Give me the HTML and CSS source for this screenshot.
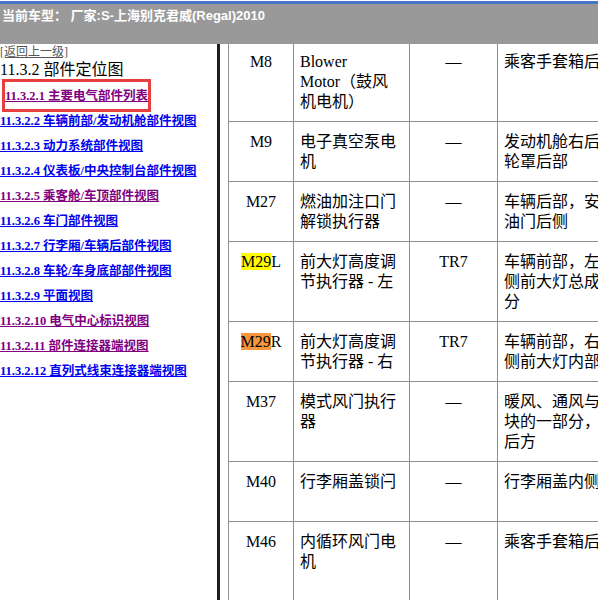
FILE: index.html
```html
<!DOCTYPE html>
<html lang="zh-CN">
<head>
    <meta charset="UTF-8">
    <meta name="viewport" content="width=device-width, initial-scale=1.0">
    <title>部件定位图</title>
    <link rel="stylesheet" href="styles.css">
</head>
<body>

    <div class="top-bar">当前车型： 厂家:S-上海别克君威(Regal)2010</div>

    <div class="frames">
        <div class="nav">
            <a href="#" class="back">[返回上一级]</a>
            <div class="nav-title">11.3.2 部件定位图</div>
            <ul class="nav-list">
                <li class="current"><a href="#" class="visited">11.3.2.1 主要电气部件列表</a></li>
                <li><a href="#">11.3.2.2 车辆前部/发动机舱部件视图</a></li>
                <li><a href="#">11.3.2.3 动力系统部件视图</a></li>
                <li><a href="#">11.3.2.4 仪表板/中央控制台部件视图</a></li>
                <li><a href="#" class="visited">11.3.2.5 乘客舱/车顶部件视图</a></li>
                <li><a href="#">11.3.2.6 车门部件视图</a></li>
                <li><a href="#">11.3.2.7 行李厢/车辆后部件视图</a></li>
                <li><a href="#">11.3.2.8 车轮/车身底部部件视图</a></li>
                <li><a href="#">11.3.2.9 平面视图</a></li>
                <li><a href="#" class="visited">11.3.2.10 电气中心标识视图</a></li>
                <li><a href="#" class="visited">11.3.2.11 部件连接器端视图</a></li>
                <li><a href="#">11.3.2.12 直列式线束连接器端视图</a></li>
            </ul>
        </div>

        <div class="content">
            <table class="parts">
                <colgroup>
                    <col class="c-code">
                    <col class="c-name">
                    <col class="c-term">
                    <col class="c-place">
                </colgroup>
                <tr>
                    <td class="code">M8</td>
                    <td>Blower<br>Motor（鼓风机电机）</td>
                    <td class="term">—</td>
                    <td class="place">乘客手套箱后方</td>
                </tr>
                <tr>
                    <td class="code">M9</td>
                    <td>电子真空泵电机</td>
                    <td class="term">—</td>
                    <td class="place">发动机舱右后<br>轮罩后部</td>
                </tr>
                <tr>
                    <td class="code">M27</td>
                    <td>燃油加注口门解锁执行器</td>
                    <td class="term">—</td>
                    <td class="place">车辆后部，安装在加<br>油门后侧</td>
                </tr>
                <tr>
                    <td class="code"><span class="hl-yellow">M29</span>L</td>
                    <td>前大灯高度调节执行器 - 左</td>
                    <td class="term">TR7</td>
                    <td class="place">车辆前部，左<br>侧前大灯总成部<br>分</td>
                </tr>
                <tr>
                    <td class="code"><span class="hl-orange">M29</span>R</td>
                    <td>前大灯高度调节执行器 - 右</td>
                    <td class="term">TR7</td>
                    <td class="place">车辆前部，右<br>侧前大灯内部</td>
                </tr>
                <tr>
                    <td class="code">M37</td>
                    <td>模式风门执行器</td>
                    <td class="term">—</td>
                    <td class="place">暖风、通风与空调模<br>块的一部分，位于仪表板<br>后方</td>
                </tr>
                <tr class="h60">
                    <td class="code">M40</td>
                    <td>行李厢盖锁闩</td>
                    <td class="term">—</td>
                    <td class="place">行李厢盖内侧</td>
                </tr>
                <tr class="h100">
                    <td class="code">M46</td>
                    <td>内循环风门电机</td>
                    <td class="term">—</td>
                    <td class="place">乘客手套箱后方</td>
                </tr>
            </table>
        </div>
    </div>

</body>
</html>
```

FILE: styles.css
```css
html,
body {
    margin: 0;
    padding: 0;
    height: 100%;
    overflow: hidden;
    background: #fff;
}

body {
    font-family: "Liberation Serif", "Noto Sans CJK SC", serif;
    color: #000;
}

.top-bar {
    height: 36px;
    margin-top: 1px;
    padding: 4px 0 0 2px;
    border-top: 3px solid #4a76c9;
    background: #999999;
    color: #fff;
    font: bold 13px/16px "Liberation Sans", "Noto Sans CJK SC", sans-serif;
    white-space: nowrap;
}

.frames {
    display: flex;
    height: 556px;
}

/* left frame */
.nav {
    flex: none;
    width: 217px;
    border-right: 3px solid #1e1e1e;
    overflow: hidden;
}

.back {
    display: block;
    font-size: 12px;
    line-height: 16px;
    color: #555;
}

.nav-title {
    font-size: 16px;
    line-height: 20px;
}

.nav-list {
    list-style: none;
    margin: 0;
    padding: 4px 0 0;
}

.nav-list li {
    height: 25px;
    line-height: 25px;
    font-size: 12.5px;
    font-weight: bold;
    white-space: nowrap;
}

.nav-list a {
    color: #0000ee;
}

.nav-list a.visited {
    color: #800080;
}

.nav-list li.current {
    width: fit-content;
    margin: -5px 0 -3px 2px;
    padding-top: 2px;
    border: 3px solid #e8403f;
}

/* right frame */
.content {
    flex: 1;
    min-width: 0;
    overflow: hidden;
    padding: 0 8px;
}

.parts {
    border-collapse: collapse;
    table-layout: fixed;
    width: 529px;
    margin-top: -3px;
    font-size: 16px;
    line-height: 20px;
}

.c-code { width: 65px; }
.c-name { width: 116px; }
.c-term { width: 88px; }
.c-place { width: 260px; }

.parts td {
    border: 1px solid #8f8f8f;
    padding: 10px 8px 9px 6px;
    vertical-align: top;
}

.parts td.code,
.parts td.term {
    padding-left: 4px;
    padding-right: 4px;
    text-align: center;
}

.parts td.place {
    white-space: nowrap;
    overflow: hidden;
}

.parts tr.h60 { height: 60px; }
.parts tr.h100 { height: 100px; }

.hl-yellow { background: #ffff00; }
.hl-orange { background: #f7963f; }
```
